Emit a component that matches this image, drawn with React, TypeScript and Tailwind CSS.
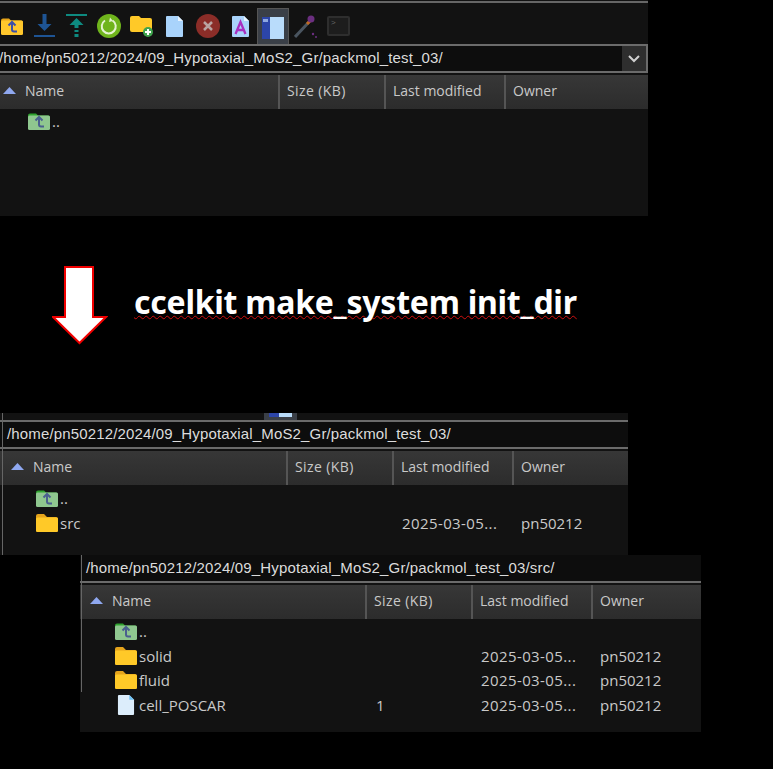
const UI_FONT = "font-['Liberation_Sans',Arial,sans-serif]";
const LIST_FONT = "font-['Open_Sans',sans-serif]";

function FolderUpIcon({ className, green }: { className: string; green?: boolean }) {
  const body = green ? "#8fc78f" : "#ffc72c";
  const tab = green ? "#2fa32f" : "#e8a51a";
  const arrow = green ? "#4a5f8f" : "#3d4fa8";
  return (
    <svg viewBox="0 0 24 18" className={className}>
      <path d="M1 3q0-2 2-2h6l2 2h10q2 0 2 2v10q0 2-2 2H3q-2 0-2-2z" fill={tab} />
      <rect x="1" y="3" width="22" height="14.500" rx="1.500" fill={body} />
      <path d="M8.500 8 12 4.500 15.500 8M12 5v7q0 2 2 2h3" fill="none" stroke={arrow} strokeWidth="2" />
    </svg>
  );
}

function FolderIcon({ className }: { className: string }) {
  return (
    <svg viewBox="0 0 24 20" className={className}>
      <path d="M1 3q0-2 2-2h6l3 3h9q2 0 2 2v11q0 2-2 2H3q-2 0-2-2z" fill="#e5a41c" />
      <rect x="1" y="4.500" width="22" height="14.500" rx="1.500" fill="#ffc928" />
    </svg>
  );
}

function FileIcon({ className, fill = "#a9d3fb", fold = "#e6f3ff", children }: { className: string; fill?: string; fold?: string; children?: React.ReactNode }) {
  return (
    <svg viewBox="0 0 19 23" className={className}>
      <path d="M1 2q0-1 1-1h11l5 5v15q0 1-1 1H2q-1 0-1-1z" fill={fill} />
      <path d="M13 1l5 5h-5z" fill={fold} />
      {children}
    </svg>
  );
}

function Toolbar() {
  return (
    <div className="flex items-center h-[36px] mt-[5px] -ml-[5px]">
      <div className="w-[33px] flex justify-center">
        <FolderUpIcon className="w-[24px] h-[19px]" />
      </div>
      <div className="w-[32px] flex justify-center">
        <svg viewBox="0 0 21 24" className="w-[21px] h-[24px]">
          <path d="M8.500 0h4v10h5l-7 7-7-7h5zM0 21h21v2H0z" fill="#1e5494" />
        </svg>
      </div>
      <div className="w-[32px] flex justify-center">
        <svg viewBox="0 0 21 24" className="w-[21px] h-[24px]">
          <path d="M0 0h21v2H0zM10.500 4l7 7h-5v3h-4v-3h-5zM8.500 16h4v2h-4zM8.500 20h4v3h-4z" fill="#0e8a80" />
        </svg>
      </div>
      <div className="w-[34px] flex justify-center">
        <svg viewBox="0 0 24 24" className="w-[24px] h-[24px]">
          <circle cx="12" cy="12" r="12" fill="#6fb41c" />
          <path d="M8 6.500a7 7 0 1 0 7.500 0" fill="none" stroke="#e4f2d0" strokeWidth="2" />
          <path d="M13 3.500l3 3.500-4 1z" fill="#e4f2d0" />
        </svg>
      </div>
      <div className="w-[32px] flex justify-center">
        <svg viewBox="0 0 24 22" className="w-[24px] h-[22px]">
          <path d="M0 3q0-2 2-2h7l2 2h9q2 0 2 2v11q0 1-1 1H2q-2 0-2-2z" fill="#ffc928" />
          <circle cx="18" cy="17" r="5" fill="#3fa34d" />
          <path d="M18 14v6M15 17h6" stroke="#fff" strokeWidth="2" />
        </svg>
      </div>
      <div className="w-[33px] flex justify-center">
        <FileIcon className="w-[19px] h-[23px]" />
      </div>
      <div className="w-[33px] flex justify-center">
        <svg viewBox="0 0 24 24" className="w-[24px] h-[24px]">
          <circle cx="12" cy="12" r="12" fill="#8b2d28" />
          <path d="M8 8l8 8M16 8l-8 8" stroke="#b9a4a2" strokeWidth="2.500" />
        </svg>
      </div>
      <div className="w-[33px] flex justify-center">
        <FileIcon className="w-[19px] h-[23px]">
          <path d="M4.500 19 9.500 7l5 12M6.500 15h6" fill="none" stroke="#a82fc0" strokeWidth="2.300" />
        </FileIcon>
      </div>
      <div className="w-[32px] h-[36px] flex justify-center items-center bg-[#3a3f47] border border-[#555] border-b-0">
        <svg viewBox="0 0 22 22" className="w-[22px] h-[22px] mt-[3px]">
          <rect width="8" height="22" fill="#2c45a8" />
          <rect x="8" width="14" height="22" fill="#b9dcfb" />
          <rect x="1" y="2" width="5" height="3" fill="#8fa8e0" />
        </svg>
      </div>
      <div className="w-[33px] flex justify-center">
        <svg viewBox="0 0 24 24" className="w-[24px] h-[24px]">
          <path d="M1 23 15 8" stroke="#4a5560" strokeWidth="3" />
          <path d="M13 10l3-3" stroke="#c06a20" strokeWidth="3" />
          <circle cx="17" cy="5" r="3.500" fill="#6b2f80" />
          <circle cx="19" cy="20" r="1.200" fill="#6b2f80" />
          <circle cx="22" cy="23" r="1" fill="#6b2f80" />
        </svg>
      </div>
      <div className="w-[33px] flex justify-center">
        <div className={`w-[23px] h-[20px] bg-[#1d1d1d] border-2 border-[#2e2e2e] rounded-[2px] text-[#666] text-[8px] leading-[10px] pl-[2px] ${UI_FONT}`}>
          &gt;
        </div>
      </div>
    </div>
  );
}

type Row = { icon: "up" | "folder" | "file"; name: string; size?: string; modified?: string; owner?: string };

type PanelProps = {
  path: string;
  rows: Row[];
  nameWidth: string;
  padLeft: string;
  iconPad: string;
  pathPad: string;
  pathBox: string;
  rowsPad: string;
  className: string;
  chevron?: boolean;
};

function FilePanel({ path, rows, nameWidth, padLeft, iconPad, pathPad, pathBox, rowsPad, className, chevron }: PanelProps) {
  return (
    <div className={`bg-[#121212] overflow-hidden text-[#c9c9c9] ${LIST_FONT} ${className}`}>
      <div className={`flex items-center border-b-2 border-[#6b6b6b] bg-[#0d0d0d] ${UI_FONT} ${pathBox} ${chevron ? "border-r-2" : ""}`}>
        <span className={`flex-1 whitespace-nowrap text-[15px] tracking-[0.15px] text-[#dcdcdc] ${pathPad}`}>{path}</span>
        {chevron && (
          <div className="w-[24px] h-full bg-[#2e2e2e] flex items-center justify-center">
            <svg viewBox="0 0 12 8" className="w-[12px] h-[8px]">
              <path d="M1 1l5 5 5-5" fill="none" stroke="#d0d0d0" strokeWidth="2" />
            </svg>
          </div>
        )}
      </div>
      <div className="flex h-[34px] mt-[2px] bg-gradient-to-b from-[#373737] to-[#2c2c2c] items-center text-[14px]">
        <div className={`flex items-center h-full pb-[4px] shrink-0 border-r-2 border-[#555] ${nameWidth} ${padLeft}`}>
          <svg viewBox="0 0 13 7" className="w-[13px] h-[7px] mr-[9px]">
            <path d="M6.500 0 13 7H0z" fill="#8fa8f0" />
          </svg>
          Name
        </div>
        <div className="w-[106px] h-full pb-[4px] shrink-0 flex items-center pl-[7px] tracking-[0.4px] border-r-2 border-[#555]">Size (KB)</div>
        <div className="w-[120px] h-full pb-[4px] shrink-0 flex items-center pl-[7px] border-r-2 border-[#555]">Last modified</div>
        <div className="flex-1 h-full pb-[4px] flex items-center pl-[7px]">Owner</div>
      </div>
      <div className={`text-[15px] ${rowsPad}`}>
        {rows.map((row) => (
          <div key={row.name} className="flex items-center h-[24.500px]">
            <div className={`flex items-center shrink-0 ${nameWidth} ${iconPad}`}>
              <div className="w-[25px] flex justify-center mr-[1px]">
                {row.icon === "up" && <FolderUpIcon className="w-[24px] h-[19px]" green />}
                {row.icon === "folder" && <FolderIcon className="w-[24px] h-[20px]" />}
                {row.icon === "file" && <FileIcon className="w-[18px] h-[22px]" fill="#dcedfb" fold="#6cc0f5" />}
              </div>
              {row.name}
            </div>
            <div className="w-[106px] shrink-0 pl-[9px]">{row.size}</div>
            <div className="w-[120px] shrink-0 pl-[8px] tracking-[0.4px]">{row.modified}</div>
            <div className="pl-[7px]">{row.owner}</div>
          </div>
        ))}
      </div>
    </div>
  );
}

function StepArrow() {
  return (
    <svg viewBox="0 0 56 79" className="w-[56px] h-[79px] ml-[52px] shrink-0">
      <path d="M13 1h28v50h13L27.500 77 1 51h12z" fill="#fff" stroke="#f00000" strokeWidth="2" />
    </svg>
  );
}

export default function App() {
  return (
    <div className="w-[773px] h-[769px] bg-black overflow-hidden">
      <div className="w-[648px] h-[216px] bg-[#121212] overflow-hidden">
        <div className="h-[2px] mt-[1px] bg-[#666]" />
        <Toolbar />
        <FilePanel
          path="/home/pn50212/2024/09_Hypotaxial_MoS2_Gr/packmol_test_03/"
          rows={[{ icon: "up", name: ".." }]}
          nameWidth="w-[280px]"
          padLeft="pl-[3px]"
          iconPad="pl-[26px]"
          pathPad="-ml-[1px]"
          pathBox="h-[29px] border-t-2"
          rowsPad="pt-0"
          className="h-[172px]"
          chevron
        />
      </div>
      <div className="flex items-start h-[197px] pt-[50px]">
        <StepArrow />
        <div className="ml-[26px] mt-[14px] text-[32px] leading-[44px] font-bold text-white font-['Noto_Sans',sans-serif] tracking-[-0.25px] underline decoration-wavy decoration-[#d01010] decoration-1 underline-offset-[1px] whitespace-nowrap [text-decoration-skip-ink:none]">
          ccelkit make_system init_dir
        </div>
      </div>
      <div className="relative w-[628px] h-[142px] bg-[#121212] overflow-hidden">
        <div className="flex flex-col justify-between h-[7px] ml-[264px] w-[33px] bg-[#3a3f47]">
          <div className="flex h-[4px] mx-[5px]">
            <div className="w-[10px] bg-[#2c45a8]" />
            <div className="flex-1 bg-[#b9dcfb]" />
          </div>
        </div>
        <div className="absolute left-[2px] top-0 bottom-0 w-[1px] bg-[#666]" />
        <FilePanel
          path="/home/pn50212/2024/09_Hypotaxial_MoS2_Gr/packmol_test_03/"
          rows={[
            { icon: "up", name: ".." },
            { icon: "folder", name: "src", modified: "2025-03-05...", owner: "pn50212" },
          ]}
          nameWidth="w-[288px]"
          padLeft="pl-[11px]"
          iconPad="pl-[34px]"
          pathPad="pl-[7px]"
          pathBox="h-[29px] border-t-2"
          rowsPad="pt-[1px]"
          className="h-[135px]"
        />
      </div>
      <div className="relative w-[621px] h-[177px] ml-[80px] bg-[#121212] overflow-hidden">
        <div className="absolute left-[1px] top-0 h-[137px] w-[1px] bg-[#666]" />
        <FilePanel
          path="/home/pn50212/2024/09_Hypotaxial_MoS2_Gr/packmol_test_03/src/"
          rows={[
            { icon: "up", name: ".." },
            { icon: "folder", name: "solid", modified: "2025-03-05...", owner: "pn50212" },
            { icon: "folder", name: "fluid", modified: "2025-03-05...", owner: "pn50212" },
            { icon: "file", name: "cell_POSCAR", size: "1", modified: "2025-03-05...", owner: "pn50212" },
          ]}
          nameWidth="w-[287px]"
          padLeft="pl-[10px]"
          iconPad="pl-[33px]"
          pathPad="pl-[6px]"
          pathBox="h-[28px]"
          rowsPad="pt-0"
          className="h-[177px]"
        />
      </div>
    </div>
  );
}
